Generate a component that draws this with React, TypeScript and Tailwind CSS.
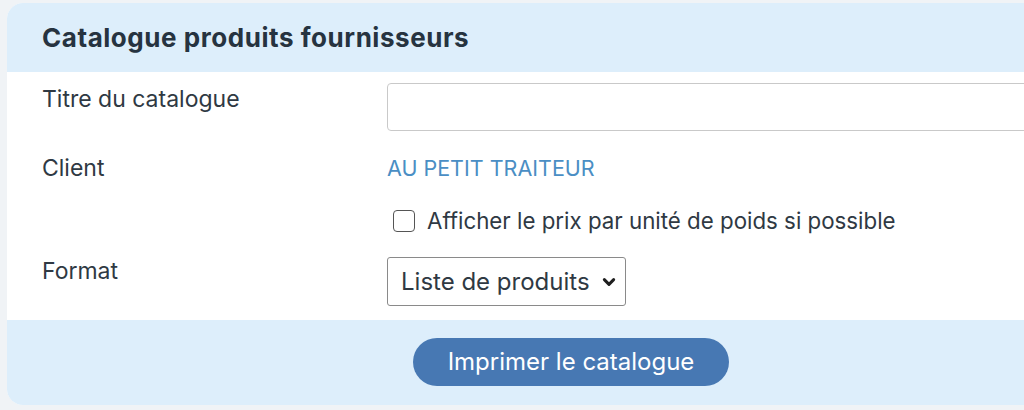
export default function App() {
  return (
    <div className="w-[1024px] h-[410px] overflow-hidden bg-[#f0f3f6] pt-[3px] pl-[7px] font-['Inter',sans-serif] text-[#2f3943]">
      <div className="w-[1128px] rounded-l-[16px] overflow-hidden bg-white">
        <div className="h-[69px] bg-[#ddeefb] pl-[35px] flex items-center">
          <h1 className="text-[26px] font-bold text-[#263340] tracking-[0.55px]">Catalogue produits fournisseurs</h1>
        </div>

        <div className="pl-[35px] pr-[40px] pt-[11px] pb-[14px]">
          <div className="flex">
            <label className="w-[345px] text-[23px] leading-[28px] pt-[2px]">Titre du catalogue</label>
            <input className="flex-1 h-[48px] border border-[#c9c9c9] rounded-[4px] outline-none" />
          </div>

          <div className="flex mt-[23px] items-center h-[28px]">
            <div className="w-[345px] text-[23px] leading-[28px]">Client</div>
            <a className="text-[21.5px] leading-[28px] text-[#4a8ec4]">AU PETIT TRAITEUR</a>
          </div>

          <div className="flex mt-[25px] items-center h-[28px] pl-[351px] gap-[12px]">
            <span className="w-[22px] h-[22px] rounded-[4px] border-[1.5px] border-[#555] bg-white" />
            <span className="text-[22.3px] leading-[28px]">Afficher le prix par unité de poids si possible</span>
          </div>

          <div className="flex mt-[22px]">
            <label className="w-[345px] text-[23px] leading-[28px]">Format</label>
            <div className="w-[239px] h-[49px] border border-[#8a8a8a] rounded-[3px] flex items-center justify-between pl-[13px] pr-[8px]">
              <span className="text-[24px]">Liste de produits</span>
              <svg width="16" height="16" viewBox="0 0 24 24" fill="none" stroke="#1f1f1f" strokeWidth="4.5" strokeLinecap="round" strokeLinejoin="round">
                <path d="M5 8.5l7 7 7-7" />
              </svg>
            </div>
          </div>
        </div>

        <div className="h-[85px] bg-[#ddeefb] flex justify-center items-start pt-[18px]">
          <button className="w-[316px] h-[48px] rounded-full bg-[#4778b3] text-white text-[24px]">
            Imprimer le catalogue
          </button>
        </div>
      </div>
    </div>
  )
}
